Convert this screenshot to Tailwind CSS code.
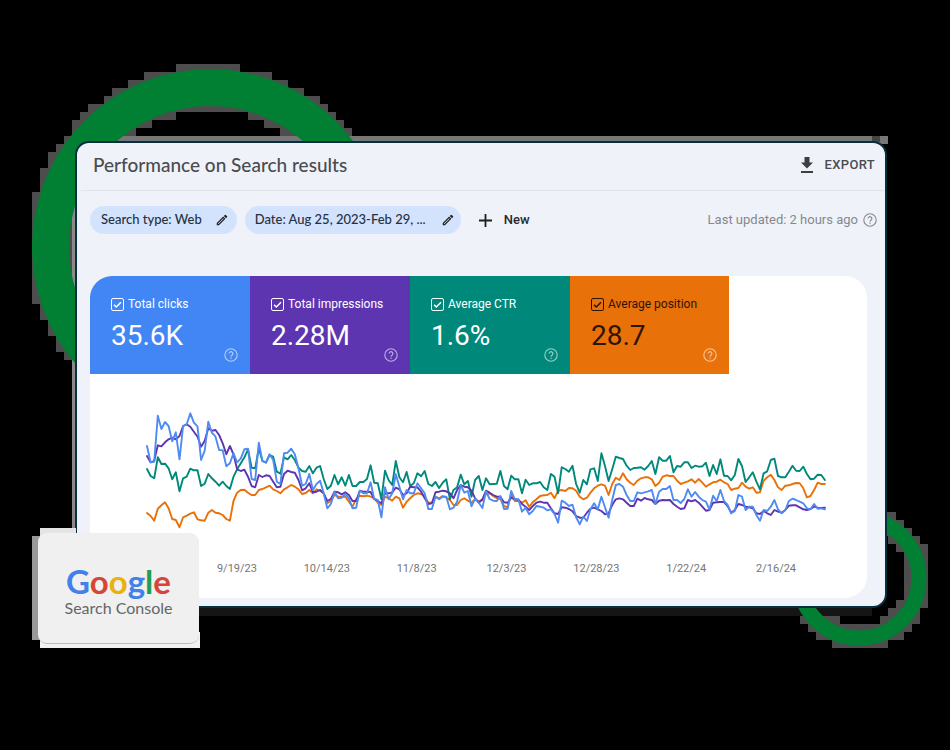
<!DOCTYPE html>
<html lang="en">
<head>
<meta charset="utf-8">
<meta name="viewport" content="width=device-width, initial-scale=1">
<title>Performance on Search results</title>
<script src="https://cdn.jsdelivr.net/npm/@tailwindcss/browser@4"></script>
</head>
<body class="bg-black">
<svg class="hidden">
  <symbol id="help" viewBox="0 0 14 14"><circle cx="7" cy="7" r="6.2" fill="none" stroke="currentColor" stroke-width="1.1"/><path d="M5.1 5.6a1.9 1.9 0 1 1 2.9 1.6c-.7.5-1 .8-1 1.5" fill="none" stroke="currentColor" stroke-width="1.1"/><circle cx="7" cy="10.3" r=".7" fill="currentColor"/></symbol>
  <symbol id="pencil" viewBox="0 0 24 24"><path fill="currentColor" d="M3 17.25V21h3.75L17.8 9.94l-3.75-3.75L3 17.25zM5.9 19H5v-.9l9.05-9.06.92.92L5.9 19zM20.7 7.04a1 1 0 0 0 0-1.41l-2.34-2.34a1 1 0 0 0-1.41 0l-1.83 1.83 3.75 3.75 1.83-1.83z"/></symbol>
</svg>
<main class="relative min-h-screen overflow-hidden pt-[141px] pr-[63px] pb-36 pl-[75px] font-['Roboto',sans-serif]">
  <!-- Decorative rings with stepped halo -->
  <svg class="absolute left-0 top-0" width="950" height="750" aria-hidden="true">
    <g id="halo" fill="#4d4d4d" shape-rendering="crispEdges"></g>
    <rect x="72" y="136" width="816" height="8" fill="#777"/>
    <rect x="72" y="200" width="6" height="330" fill="#8a8a8a"/>
    <rect x="80" y="606" width="792" height="10" fill="#151515"/>
    <rect x="872" y="136" width="8" height="6" fill="#444"/>
    <circle cx="210" cy="247" r="159.5" fill="none" stroke="#018034" stroke-width="37"/>
    <circle cx="859" cy="578" r="60" fill="none" stroke="#018034" stroke-width="15"/>
  </svg>

  <section class="relative rounded-[14px] border-2 border-[#06303f] bg-[#eff3f9]">
    <header class="ml-1 flex h-12 items-center justify-between border-b border-[#e1e5ea] pr-[10px] pb-1 pl-3">
      <h1 class="font-['Lato',sans-serif] text-[19px] leading-6 font-medium text-[#4a4c4f]">Performance on Search results</h1>
      <button class="flex items-center gap-[11px] text-[13px] font-medium tracking-wide text-[#4a4c4f]">
        <svg class="h-4 w-[14px]" viewBox="0 0 14 16" fill="#3c4043"><path d="M4.500 0h5v5.500H13L7 11.500 1 5.500h3.500zM1 14h12v2H1z"/></svg>
        EXPORT
      </button>
    </header>

    <div class="flex items-center pt-[15px] pl-[13px] pr-2">
      <button class="flex h-7 items-center gap-[13px] rounded-full bg-[#d3e3fd] pl-[11px] pr-2 font-['Lato',sans-serif] text-[13px] font-medium text-[#27303e]">Search type: Web
        <svg class="size-[14px] text-[#1f1f1f]"><use href="#pencil"/></svg></button>
      <button class="ml-2 flex h-7 items-center gap-[15px] rounded-full bg-[#d3e3fd] pl-[10px] pr-[6px] font-['Lato',sans-serif] text-[13px] font-medium text-[#27303e]">Date: Aug 25, 2023-Feb 29, ...
        <svg class="size-[14px] text-[#1f1f1f]"><use href="#pencil"/></svg></button>
      <button class="ml-[18px] flex items-center gap-3 text-[13px] font-medium text-[#27292c]">
        <svg class="size-[13px]" viewBox="0 0 13 13" stroke="#1f1f1f" stroke-width="1.800"><path d="M6.500 0v13M0 6.500h13"/></svg>New</button>
      <p class="ml-auto flex items-center gap-[5px] text-[13px] text-[#85898d]">Last updated: 2 hours ago <svg class="size-[14px]"><use href="#help"/></svg></p>
    </div>

    <div class="mt-[42px] mr-[18px] mb-2 ml-[13px] overflow-hidden rounded-[22px] bg-white pb-[21px]">
      <div class="flex">
        <div class="relative h-[98px] w-40 bg-[#4285f4] pt-[20px] pl-[21px] text-white">
          <label class="flex items-center gap-1 text-[12px] leading-4"><span class="relative size-[13px]"><input type="checkbox" checked class="block size-[13px] appearance-none rounded-[2px] border border-current"><svg class="pointer-events-none absolute inset-0" viewBox="0 0 13 13" fill="none" stroke="currentColor" stroke-width="1.500"><path d="M3 6.700l2.300 2.300L10 4.200"/></svg></span>Total clicks</label>
          <p class="mt-2 text-[28px] leading-8">35.6K</p>
          <svg class="absolute right-3 bottom-3 size-[14px] text-white/60"><use href="#help"/></svg>
        </div>
        <div class="relative h-[98px] w-40 bg-[#5e35b1] pt-[20px] pl-[21px] text-white">
          <label class="flex items-center gap-1 text-[12px] leading-4"><span class="relative size-[13px]"><input type="checkbox" checked class="block size-[13px] appearance-none rounded-[2px] border border-current"><svg class="pointer-events-none absolute inset-0" viewBox="0 0 13 13" fill="none" stroke="currentColor" stroke-width="1.500"><path d="M3 6.700l2.300 2.300L10 4.200"/></svg></span>Total impressions</label>
          <p class="mt-2 text-[28px] leading-8">2.28M</p>
          <svg class="absolute right-3 bottom-3 size-[14px] text-white/60"><use href="#help"/></svg>
        </div>
        <div class="relative h-[98px] w-40 bg-[#00897b] pt-[20px] pl-[21px] text-white">
          <label class="flex items-center gap-1 text-[12px] leading-4"><span class="relative size-[13px]"><input type="checkbox" checked class="block size-[13px] appearance-none rounded-[2px] border border-current"><svg class="pointer-events-none absolute inset-0" viewBox="0 0 13 13" fill="none" stroke="currentColor" stroke-width="1.500"><path d="M3 6.700l2.300 2.300L10 4.200"/></svg></span>Average CTR</label>
          <p class="mt-2 text-[28px] leading-8">1.6%</p>
          <svg class="absolute right-3 bottom-3 size-[14px] text-white/60"><use href="#help"/></svg>
        </div>
        <div class="relative h-[98px] w-[159px] bg-[#e8710a] pt-[20px] pl-[21px] text-[#2e1503]">
          <label class="flex items-center gap-1 text-[12px] leading-4"><span class="relative size-[13px]"><input type="checkbox" checked class="block size-[13px] appearance-none rounded-[2px] border border-current"><svg class="pointer-events-none absolute inset-0" viewBox="0 0 13 13" fill="none" stroke="currentColor" stroke-width="1.500"><path d="M3 6.700l2.300 2.300L10 4.200"/></svg></span>Average position</label>
          <p class="mt-2 text-[28px] leading-8">28.7</p>
          <svg class="absolute right-3 bottom-3 size-[14px] text-white/60"><use href="#help"/></svg>
        </div>
      </div>
      <svg class="block w-full" viewBox="0 0 777 187" role="img" aria-label="Clicks, impressions, CTR and position over time">
        <g fill="none" stroke-width="1.900" stroke-linejoin="round" stroke-linecap="round">
          <polyline id="position" stroke="#e8710a"/>
          <polyline id="ctr" stroke="#00897b"/>
          <polyline id="impressions" stroke="#5e35b1"/>
          <polyline id="clicks" stroke="#4f8bf0"/>
        </g>
      </svg>
      <div class="grid grid-cols-7 pr-[46px] pl-[102px] text-center text-[11px] leading-4 text-[#757575]">
        <span>9/19/23</span><span>10/14/23</span><span>11/8/23</span><span>12/3/23</span><span>12/28/23</span><span>1/22/24</span><span>2/16/24</span>
      </div>
    </div>
  </section>

  <!-- Product badge -->
  <div class="absolute left-8 top-[528px] h-[120px] w-[168px]">
    <div class="absolute top-2 left-0 h-[104px] w-2 bg-[#999]"></div>
    <div class="absolute top-0 left-2 h-4 w-9 bg-[#e4e4e4]"></div>
    <div class="absolute bottom-0 left-2 h-4 w-40 bg-[#f1f1f1]"></div>
    <div class="absolute top-[5px] left-[6px] flex h-[111px] w-[161px] flex-col items-center rounded-[9px] border-b border-[#bbb] bg-[#f0f0f0] pt-[30px] font-['Lato',sans-serif]">
      <div class="text-[33px] leading-9 font-bold"><span class="text-[#4280ea]">G</span><span class="text-[#d64537]">o</span><span class="text-[#eab10c]">o</span><span class="text-[#4280ea]">g</span><span class="text-[#1f9d55]">l</span><span class="text-[#d64537]">e</span></div>
      <div class="mt-px text-[16px] leading-4 text-[#666]">Search Console</div>
    </div>
  </div>
</main>
<script>
// Daily series; first 49 days are offsets from one baseline, the rest from another 90 units lower.
const series = {
  clicks: [[138,187,185,47,87,66,78,124,97,178,78,73,40,68,79,180,152,65,98,110,150,151,199,190,160,187,175,148,146,237,240,128,183,187,163,180,245,252,160,158,146,163,205,257,252,222,270,252,242],
    [190,235,222,185,205,203,192,205,235,233,182,190,190,157,207,210,262,172,208,190,133,170,208,180,190,190,160,175,190,237,237,200,208,200,200,238,233,215,165,188,183,229,205,218,
    234,184,207,212,213,198,237,236,183,208,208,245,233,253,243,228,230,233,241,238,252,278,212,218,228,224,262,283,260,273,238,220,238,200,232,263,210,165,162,170,195,213,213,187,190,187,184,
    180,222,185,177,177,168,210,210,219,207,178,200,186,200,210,215,238,197,213,180,213,225,250,243,195,200,240,230,230,255,272,240,243,230,210,238,250,240,213,206,210,215,220,235,238,222,236,235,238]],
  impressions: [[168,187,183,136,139,127,118,113,118,108,78,73,80,95,110,140,122,85,92,90,105,130,163,138,163,208,213,209,230,258,262,225,231,226,228,245,262,260,222,212,216,218,240,271,265,250,277,275,270],
    [190,213,207,185,187,193,187,195,213,213,182,185,185,186,207,213,220,190,190,187,173,178,195,190,170,172,172,185,205,222,220,187,185,182,184,190,205,180,165,170,172,182,205,218,
    208,182,188,195,200,200,217,218,203,208,209,222,230,240,228,218,215,218,218,235,250,252,232,233,237,244,258,263,263,248,236,233,238,243,253,250,225,208,205,208,218,228,228,206,212,204,208,
    210,222,212,210,211,210,222,230,237,235,210,214,210,218,230,242,240,218,217,216,216,228,248,240,222,225,230,232,235,250,252,243,250,255,240,245,248,240,227,226,226,232,238,240,237,230,233,234,233]],
  ctr: [[207,228,235,172,192,191,205,238,217,274,235,230,206,211,211,258,251,222,235,245,257,245,258,267,230,208,190,172,148,203,205,145,183,188,165,170,215,221,172,178,165,180,203,213,215,198,220,203,198],
    [147,177,167,135,163,142,167,135,168,168,156,156,147,106,158,160,208,122,150,165,93,142,157,126,168,160,130,139,123,162,168,156,174,158,148,208,180,172,134,163,153,200,150,138,
    180,145,163,162,161,123,168,178,137,148,148,190,149,165,160,160,156,172,180,132,140,190,112,117,125,107,162,188,150,163,118,115,153,70,108,153,118,80,84,87,107,120,114,113,112,119,108,
    93,132,82,92,92,78,127,108,110,97,97,114,107,110,109,98,138,105,132,88,137,138,151,135,87,108,156,142,127,155,178,130,124,90,86,138,142,142,125,107,122,123,110,132,148,146,134,135,150]],
  position: [[339,348,362,326,316,307,325,357,360,382,352,347,341,337,358,361,362,338,330,338,340,345,357,362,303,278,270,269,278,285,285,270,267,262,257,268,273,280,268,262,255,260,268,282,279,270,280,268,272],
    [190,220,213,195,200,200,200,215,230,208,197,199,197,200,205,218,225,200,205,212,200,205,233,215,205,195,190,192,198,218,218,200,205,198,203,210,225,225,210,205,212,218,208,214,
    210,192,190,198,205,208,228,232,195,213,212,218,211,230,217,208,198,196,195,188,205,182,180,183,174,175,182,200,208,203,188,175,167,163,167,195,162,143,150,130,148,158,165,152,145,142,142,
    148,168,158,140,136,138,138,152,162,158,154,148,158,147,158,170,163,157,155,149,157,162,180,176,174,158,170,176,172,188,187,152,142,134,150,172,180,167,166,162,159,160,175,202,198,180,158,162,162]]
};
for (const [id, [a, b]] of Object.entries(series)) {
  const ys = a.concat(b.map(v => v + 90));
  document.getElementById(id).setAttribute('points', ys.map((v, i) => (57 + i * 3.606).toFixed(1) + ',' + (26 + v / 3).toFixed(1)).join(' '));
}
// Halo: every 8px cell that a ring touches.
let cells = '';
for (const [cx, cy, inner, outer] of [[210, 247, 141, 177], [859, 578, 53, 67]]) {
  for (let x = 0; x < 950; x += 8) for (let y = 0; y < 750; y += 8) {
    const nx = Math.max(x, Math.min(cx, x + 8)) - cx, ny = Math.max(y, Math.min(cy, y + 8)) - cy;
    const fx = Math.max(Math.abs(x - cx), Math.abs(x + 8 - cx)), fy = Math.max(Math.abs(y - cy), Math.abs(y + 8 - cy));
    if (Math.hypot(nx, ny) < outer && Math.hypot(fx, fy) > inner) cells += `<rect x="${x}" y="${y}" width="8" height="8"/>`;
  }
}
document.getElementById('halo').innerHTML = cells;
</script>
</body>
</html>
